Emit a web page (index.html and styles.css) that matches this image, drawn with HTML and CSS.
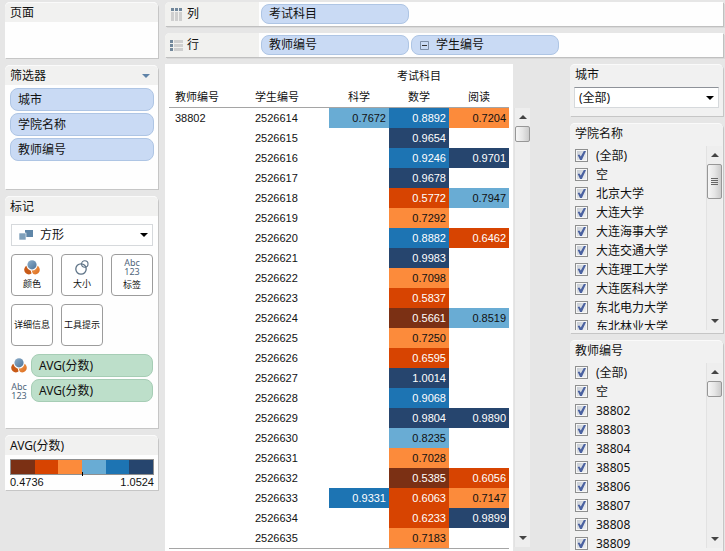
FILE: index.html
```html
<!DOCTYPE html>
<html lang="zh-CN">
<head>
<meta charset="utf-8">
<title>考试科目</title>
<link rel="stylesheet" href="styles.css">
</head>
<body>
<svg class="defs" aria-hidden="true">
  <defs>
    <linearGradient id="g-blue" x1="0" y1="0" x2="1" y2="1"><stop offset="0" stop-color="#8fb0cc"/><stop offset="1" stop-color="#4d7398"/></linearGradient>
    <linearGradient id="g-orange" x1="0" y1="0" x2="1" y2="1"><stop offset="0" stop-color="#f5a35c"/><stop offset="1" stop-color="#d96a1c"/></linearGradient>
    <symbol id="i-color" viewBox="0 0 16 15">
      <circle cx="4.8" cy="9.8" r="4.6" fill="#c85a17"/>
      <circle cx="11.2" cy="9.8" r="4.6" fill="url(#g-orange)"/>
      <circle cx="8" cy="5" r="5.6" fill="#fff"/>
      <circle cx="8" cy="4.8" r="4.6" fill="url(#g-blue)"/>
      <path d="M7 10 8.4 14" stroke="#fff" stroke-width="1"/>
    </symbol>
  </defs>
</svg>
<div class="app">
  <aside class="side">
    <section class="card card-pages"><h2>页面</h2></section>

    <section class="card card-filters">
      <h2>筛选器<span class="caret"></span></h2>
      <div class="pills">
        <button class="pill">城市</button>
        <button class="pill">学院名称</button>
        <button class="pill">教师编号</button>
      </div>
    </section>

    <section class="card card-marks">
      <h2>标记</h2>
      <div class="marks">
        <label class="drop">
          <svg class="square-icon" viewBox="0 0 14 10"><rect x="6" y="0" width="8" height="7" fill="#5f86a8"/><rect x="0" y="3" width="7" height="7" fill="#7fa0bb" stroke="#fff" stroke-width=".6"/></svg>
          <select aria-label="标记"><option>方形</option></select>
        </label>
        <div class="mark-buttons">
          <button class="mark"><svg class="color-icon"><use href="#i-color"/></svg>颜色</button>
          <button class="mark"><svg class="size-icon" viewBox="0 0 14 15" fill="none" stroke="#5d7286"><circle cx="6" cy="9" r="5.2" stroke-width="1.3"/><circle cx="9.8" cy="4" r="3.2" stroke-width="1.1"/></svg>大小</button>
          <button class="mark"><span class="abc"><span>Abc</span><span>123</span></span>标签</button>
          <button class="mark">详细信息</button>
          <button class="mark">工具提示</button>
        </div>
        <div class="encodings">
          <svg class="color-icon"><use href="#i-color"/></svg>
          <button class="pill green">AVG(分数)</button>
          <span class="abc"><span>Abc</span><span>123</span></span>
          <button class="pill green">AVG(分数)</button>
        </div>
      </div>
    </section>

    <section class="card card-legend">
      <h2>AVG(分数)</h2>
      <div class="legend">
        <div class="ramp"><i class="v1"></i><i class="v2"></i><i class="v3"></i><i class="v4"></i><i class="v5"></i><i class="v6"></i></div>
        <div class="range"><span>0.4736</span><span>1.0524</span></div>
      </div>
    </section>
  </aside>

  <main class="main">
    <section class="shelf">
      <h2><svg viewBox="0 0 13 13"><path fill="#cfcfcf" d="M1 4h3v9H1zM5 4h3v9H5zM9 4h3v9H9z"/><path fill="#71879b" d="M1 0h3v3H1zM5 0h3v3H5zM9 0h3v3H9z"/></svg>列</h2>
      <button class="pill">考试科目</button>
    </section>
    <section class="shelf">
      <h2><svg viewBox="0 0 13 13"><path fill="#cfcfcf" d="M4 1h9v3H4zM4 5h9v3H4zM4 9h9v3H4z"/><path fill="#71879b" d="M0 1h3v3H0zM0 5h3v3H0zM0 9h3v3H0z"/></svg>行</h2>
      <button class="pill">教师编号</button>
      <button class="pill"><svg class="minus" viewBox="0 0 9 9"><path d="M.5.5h8v8h-8z" fill="none" stroke="#7d8fa8"/><path d="M2 4h5v1H2z" fill="#333"/></svg>学生编号</button>
    </section>

    <div class="work">
      <div class="sheet">
        <table>
          <colgroup><col class="dim"><col class="dim"><col class="val"><col class="val"><col class="val"></colgroup>
          <thead>
            <tr class="super"><td colspan="2"></td><th colspan="3">考试科目</th></tr>
            <tr class="heads"><th class="left">教师编号</th><th class="left">学生编号</th><th>科学</th><th>数学</th><th>阅读</th></tr>
          </thead>
          <tbody>
            <tr><th>38802</th><th>2526614</th><td class="v4">0.7672</td><td class="v5">0.8892</td><td class="v3">0.7204</td></tr>
            <tr><th></th><th>2526615</th><td></td><td class="v6">0.9654</td><td></td></tr>
            <tr><th></th><th>2526616</th><td></td><td class="v5">0.9246</td><td class="v6">0.9701</td></tr>
            <tr><th></th><th>2526617</th><td></td><td class="v6">0.9678</td><td></td></tr>
            <tr><th></th><th>2526618</th><td></td><td class="v2">0.5772</td><td class="v4">0.7947</td></tr>
            <tr><th></th><th>2526619</th><td></td><td class="v3">0.7292</td><td></td></tr>
            <tr><th></th><th>2526620</th><td></td><td class="v5">0.8882</td><td class="v2">0.6462</td></tr>
            <tr><th></th><th>2526621</th><td></td><td class="v6">0.9983</td><td></td></tr>
            <tr><th></th><th>2526622</th><td></td><td class="v3">0.7098</td><td></td></tr>
            <tr><th></th><th>2526623</th><td></td><td class="v2">0.5837</td><td></td></tr>
            <tr><th></th><th>2526624</th><td></td><td class="v1">0.5661</td><td class="v4">0.8519</td></tr>
            <tr><th></th><th>2526625</th><td></td><td class="v3">0.7250</td><td></td></tr>
            <tr><th></th><th>2526626</th><td></td><td class="v2">0.6595</td><td></td></tr>
            <tr><th></th><th>2526627</th><td></td><td class="v6">1.0014</td><td></td></tr>
            <tr><th></th><th>2526628</th><td></td><td class="v5">0.9068</td><td></td></tr>
            <tr><th></th><th>2526629</th><td></td><td class="v6">0.9804</td><td class="v6">0.9890</td></tr>
            <tr><th></th><th>2526630</th><td></td><td class="v4">0.8235</td><td></td></tr>
            <tr><th></th><th>2526631</th><td></td><td class="v3">0.7028</td><td></td></tr>
            <tr><th></th><th>2526632</th><td></td><td class="v1">0.5385</td><td class="v2">0.6056</td></tr>
            <tr><th></th><th>2526633</th><td class="v5">0.9331</td><td class="v2">0.6063</td><td class="v3">0.7147</td></tr>
            <tr><th></th><th>2526634</th><td></td><td class="v2">0.6233</td><td class="v6">0.9899</td></tr>
            <tr><th></th><th>2526635</th><td></td><td class="v3">0.7183</td><td></td></tr>
          </tbody>
        </table>
      </div>
      <div class="scroll sheet-scroll"><i class="up"></i><i class="thumb"></i><i class="down"></i></div>

      <aside class="quick">
        <section class="card flat card-city">
          <h2>城市</h2>
          <label class="drop"><select aria-label="城市"><option>(全部)</option></select></label>
        </section>
        <section class="card flat card-school">
          <h2>学院名称</h2>
          <div class="list">
            <div class="checks">
              <label><input type="checkbox" checked>(全部)</label>
              <label><input type="checkbox" checked>空</label>
              <label><input type="checkbox" checked>北京大学</label>
              <label><input type="checkbox" checked>大连大学</label>
              <label><input type="checkbox" checked>大连海事大学</label>
              <label><input type="checkbox" checked>大连交通大学</label>
              <label><input type="checkbox" checked>大连理工大学</label>
              <label><input type="checkbox" checked>大连医科大学</label>
              <label><input type="checkbox" checked>东北电力大学</label>
              <label><input type="checkbox" checked>东北林业大学</label>
            </div>
            <div class="scroll"><i class="up"></i><i class="thumb long"></i><i class="down"></i></div>
          </div>
        </section>
        <section class="card flat card-teacher">
          <h2>教师编号</h2>
          <div class="list">
            <div class="checks">
              <label><input type="checkbox" checked>(全部)</label>
              <label><input type="checkbox" checked>空</label>
              <label><input type="checkbox" checked>38802</label>
              <label><input type="checkbox" checked>38803</label>
              <label><input type="checkbox" checked>38804</label>
              <label><input type="checkbox" checked>38805</label>
              <label><input type="checkbox" checked>38806</label>
              <label><input type="checkbox" checked>38807</label>
              <label><input type="checkbox" checked>38808</label>
              <label><input type="checkbox" checked>38809</label>
            </div>
            <div class="scroll"><i class="up"></i><i class="thumb"></i><i class="down"></i></div>
          </div>
        </section>
      </aside>
    </div>
  </main>
</div>
</body>
</html>
```
FILE: styles.css
```css
* { box-sizing: border-box; }

body {
  margin: 0;
  background: #e6e6e6;
  color: #111;
  font: 12px/20px "Noto Sans", "Noto Sans CJK SC", sans-serif;
}

button, select, input { font: inherit; color: inherit; margin: 0; }
h2 { margin: 0; font-size: 12px; font-weight: 400; }
.defs { position: absolute; width: 0; height: 0; }

.app {
  display: grid;
  grid-template-columns: 153px 1fr;
  gap: 7px;
  height: 100vh;
  padding: 2px 2px 0 5px;
  overflow: hidden;
}

/* cards */
.side { display: flex; flex-direction: column; gap: 7px; }
.card {
  background: #fefefe;
  border-radius: 5px 5px 0 0;
  box-shadow: 1px 1px 0 #c6c6c6;
}
.card h2 {
  display: flex;
  align-items: center;
  justify-content: space-between;
  height: 20px;
  padding: 0 8px 0 5px;
  background: #f1f1f0;
  border-radius: 5px 5px 0 0;
  border-top: 1px solid #fafafa;
}
.card-pages { height: 56px; }
.card-filters { height: 124px; }
.card-marks { height: 232px; }
.caret { border: 4px solid transparent; border-top-color: #5f83a8; border-bottom: 0; }

/* pills */
.pill {
  display: flex;
  align-items: center;
  height: 23px;
  padding: 0 7px;
  background: #c9daf4;
  border: 1px solid #aec5e4;
  border-radius: 8px;
  text-align: left;
}
.pill.green { background: #bddfca; border-color: #a6cdb5; }
.pills { display: flex; flex-direction: column; gap: 2px; padding: 3px 4px 3px 5px; }

/* drop-downs */
.drop {
  display: flex;
  align-items: center;
  position: relative;
  height: 22px;
  background: #fff;
  border: 1px solid #d6d9dc;
}
.drop::after {
  content: "";
  position: absolute;
  right: 4px;
  border: 4px solid transparent;
  border-top-color: #000;
  border-bottom: 0;
  pointer-events: none;
}
.drop select {
  appearance: none;
  flex: 1;
  height: 100%;
  padding: 0 4px;
  border: 0;
  background: none;
}

/* marks */
.marks { display: flex; flex-direction: column; gap: 8px; padding: 8px 5px 8px 6px; }
.square-icon { width: 14px; height: 10px; margin: 0 3px 0 7px; }
.mark-buttons { display: grid; grid-template-columns: repeat(3, 42px); gap: 8px; }
.mark {
  display: flex;
  flex-direction: column;
  align-items: center;
  justify-content: center;
  gap: 2px;
  height: 42px;
  padding: 0;
  background: #fff;
  border: 1px solid #9c9c9c;
  border-radius: 4px;
  font-size: 9px;
  line-height: 14px;
  white-space: nowrap;
}
.color-icon { width: 16px; height: 15px; }
.size-icon { width: 14px; height: 15px; }
.abc {
  display: flex;
  flex-direction: column;
  color: #4f657b;
  font: 9px/9px "Noto Sans", sans-serif;
  text-align: center;
}
.encodings {
  display: grid;
  grid-template-columns: 16px 1fr;
  align-items: center;
  gap: 2px 4px;
}

/* legend */
.legend { padding: 4px 4px 0 5px; }
.ramp {
  display: flex;
  position: relative;
  height: 16px;
  border: 1px solid #8f8f8f;
}
.ramp i { flex: 1; }
.ramp::after {
  content: "";
  position: absolute;
  left: 50%;
  bottom: -2px;
  width: 1px;
  height: 4px;
  background: #000;
}
.range {
  display: flex;
  justify-content: space-between;
  font: 11px/15px "Liberation Sans", sans-serif;
}

/* shelves */
.main { display: flex; flex-direction: column; gap: 7px; min-width: 0; }
.shelf {
  display: flex;
  align-items: center;
  gap: 2px;
  height: 24px;
  background: #fefefe;
  border-radius: 5px 0 0 0;
  box-shadow: 1px 1px 0 #c0c0c0, 2px 2px 0 #d9d9d9;
}
.shelf h2 {
  display: flex;
  align-items: center;
  gap: 4px;
  width: 94px;
  height: 24px;
  padding-left: 5px;
  background: #f1f1ef;
  border-radius: 5px 0 0 0;
}
.shelf h2 svg { width: 13px; height: 13px; }
.shelf .pill { width: 148px; height: 20px; }
.minus { width: 9px; height: 9px; margin: 0 7px 0 1px; }

/* worksheet */
.work {
  display: grid;
  grid-template-columns: 348px 17px 1fr;
  flex: 1;
  min-height: 0;
}
.sheet { padding: 2px 4px 0; background: #fff; overflow: hidden; }
table {
  width: 100%;
  table-layout: fixed;
  border-collapse: separate;
  border-spacing: 0;
  border-bottom: 1px solid #a5a5a5;
  font: 11px/20px "Liberation Sans", "Noto Sans CJK SC", sans-serif;
}
.dim { width: 80px; }
.val { width: 60px; }
th { padding: 0; font-weight: 400; height: 20px; }
td { padding: 0 3px; height: 20px; text-align: right; }
.heads th { height: 22px; border-bottom: 1px solid #a5a5a5; }
.heads th.left, tbody th { padding-left: 6px; text-align: left; }

.v1 { background: #7b3014; color: #fff; }
.v2 { background: #d74401; color: #fff; }
.v3 { background: #fc8b3b; }
.v4 { background: #69acd4; }
.v5 { background: #1d74b3; color: #fff; }
.v6 { background: #26456e; color: #fff; }

/* scroll bars */
.scroll {
  display: flex;
  flex-direction: column;
  align-items: center;
  width: 16px;
  background: #eeeeee;
  border-left: 1px solid #e2e2e2;
}
.scroll i { flex: none; }
.up { margin: 7px 0; border: 4px solid transparent; border-bottom-color: #444; border-top: 0; }
.down { margin: auto 0 7px; border: 4px solid transparent; border-top-color: #444; border-bottom: 0; }
.thumb {
  width: 15px;
  height: 16px;
  border: 1px solid #979797;
  border-radius: 2px;
  background: linear-gradient(90deg, #f6f6f6, #e6e6e6 50%, #cbcbcb);
}
.thumb.long {
  display: flex;
  align-items: center;
  justify-content: center;
  height: 35px;
}
.thumb.long::before {
  content: "";
  width: 7px;
  height: 8px;
  background: repeating-linear-gradient(#666 0 1px, transparent 1px 2px);
}
.sheet-scroll { margin: 44px 0 4px 1px; }

/* quick filters */
.quick {
  display: flex;
  flex-direction: column;
  gap: 7px;
  justify-self: end;
  width: 153px;
  min-height: 0;
}
.flat, .flat h2 { background: #f1f1f1; }
.card-city { height: 52px; }
.card-city .drop { height: 21px; margin: 3px 4px 0; border-top-color: #8e9299; }
.card-school { height: 210px; }
.card-teacher { flex: 1; min-height: 0; }
.list { display: flex; height: 184px; margin: 3px 1px 0 5px; }
.card-teacher .list { height: 188px; }
.card-teacher .scroll { margin-bottom: 3px; }
.checks { flex: 1; overflow: hidden; }
.checks label {
  display: flex;
  align-items: center;
  gap: 8px;
  height: 19px;
  line-height: 19px;
}
.checks input {
  appearance: none;
  flex: none;
  display: grid;
  place-items: center;
  width: 13px;
  height: 13px;
  border: 1px solid #8e8f8f;
  background: linear-gradient(135deg, #c3c9d1, #f4f5f6);
  box-shadow: inset 0 0 0 1px #f7f7f7;
}
.checks input:checked::after {
  content: "";
  width: 9px;
  height: 9px;
  background: #4a61a0;
  clip-path: polygon(8% 45%, 26% 38%, 42% 62%, 76% 0%, 100% 0%, 54% 100%, 34% 100%);
}
```
